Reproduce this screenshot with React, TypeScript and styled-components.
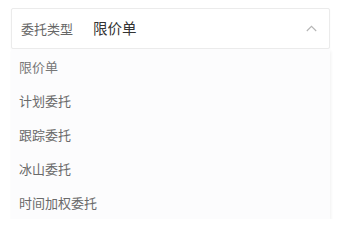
import styled, { createGlobalStyle } from 'styled-components';

const GlobalStyle = createGlobalStyle`
  html, body {
    margin: 0;
    padding: 0;
    background: #ffffff;
  }
  body {
    font-family: "Noto Sans CJK SC", "Noto Sans", sans-serif;
  }
`;

const Page = styled.div`
  padding: 8px 12px 0 11px;
  width: 319px;
`;

const SelectBox = styled.div`
  display: flex;
  align-items: center;
  height: 39px;
  padding: 0 12px 0 9px;
  border: 1px solid #ebebeb;
  border-radius: 2px;
  background: #ffffff;
  box-shadow: 0 1px 2px rgba(0, 0, 0, 0.04);
`;

const Label = styled.span`
  font-size: 13px;
  color: #666666;
  margin-right: 20px;
  line-height: 1;
`;

const Value = styled.span`
  flex: 1;
  font-size: 14.5px;
  color: #333333;
  line-height: 1;
`;

const Chevron = styled.svg`
  width: 11px;
  height: 7px;
`;

const Menu = styled.ul`
  list-style: none;
  margin: 0;
  padding: 0;
  background: #fcfcfd;
  box-shadow: 1px 2px 3px rgba(0, 0, 0, 0.06);
`;

const Option = styled.li<{ $active?: boolean }>`
  display: flex;
  align-items: center;
  height: 34px;
  padding-left: 8px;
  font-size: 13px;
  color: ${(p) => (p.$active ? '#777777' : '#6a6a6a')};
`;

const options = ['限价单', '计划委托', '跟踪委托', '冰山委托', '时间加权委托'];

export default function App() {
  return (
    <>
      <GlobalStyle />
      <Page>
        <SelectBox>
          <Label>委托类型</Label>
          <Value>限价单</Value>
          <Chevron viewBox="0 0 11 7">
            <path d="M0.8 6 L5.5 1.3 L10.2 6" fill="none" stroke="#b5b5b5" strokeWidth="1.1" />
          </Chevron>
        </SelectBox>
        <Menu>
          {options.map((o, i) => (
            <Option key={o} $active={i === 0}>
              {o}
            </Option>
          ))}
        </Menu>
      </Page>
    </>
  );
}
